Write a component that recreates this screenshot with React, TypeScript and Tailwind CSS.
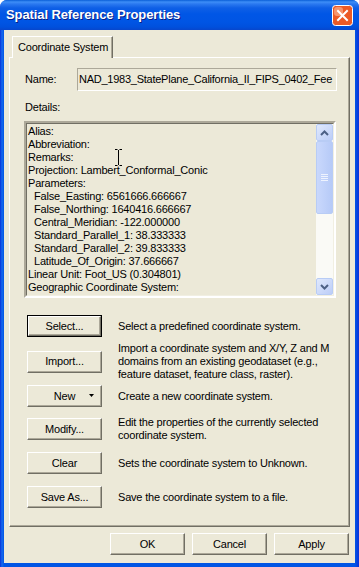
import React from "react";

function Btn({ label, def = false, arrow = false }: { label: string; def?: boolean; arrow?: boolean }) {
  return (
    <div
      className={
        "relative w-[75px] h-[22px] shrink-0 flex items-center justify-center bg-[#ece9d8] " +
        (def ? "border border-black" : "")
      }
    >
      <div className="absolute inset-0 border-t border-l border-t-white border-l-white border-r border-b border-r-[#716f64] border-b-[#716f64] shadow-[inset_-1px_-1px_0_#aca899]" />
      <span className="relative">{label}</span>
      {arrow && (
        <svg className="absolute right-[8px] top-[9px]" width="5" height="3" viewBox="0 0 5 3">
          <path d="M0 0H5L2.5 3Z" fill="#000" />
        </svg>
      )}
    </div>
  );
}

function ScrollBtn({ up }: { up: boolean }) {
  return (
    <div className="w-[17px] h-[17px] shrink-0 rounded-[2px] border border-[#b8ccf5] bg-[linear-gradient(to_bottom_right,#e0e9fd,#bccdf7)] flex items-center justify-center">
      <svg width="9" height="6" viewBox="0 0 9 6">
        {up ? (
          <path d="M1 5L4.5 1.5L8 5" stroke="#4d6185" strokeWidth="2" fill="none" />
        ) : (
          <path d="M1 1L4.5 4.5L8 1" stroke="#4d6185" strokeWidth="2" fill="none" />
        )}
      </svg>
    </div>
  );
}

function CloseIcon() {
  return (
    <svg width="21" height="21" viewBox="0 0 21 21" className="mr-[1px] shrink-0">
      <rect x="0.5" y="0.5" width="20" height="20" rx="3" fill="#ec5a26" stroke="#ffffff" />
      <rect x="2" y="2" width="9" height="9" rx="3" fill="#f6946c" />
      <path d="M6 6L15 15M15 6L6 15" stroke="#ffffff" strokeWidth="2" strokeLinecap="square" />
    </svg>
  );
}

export default function App() {
  const lines: [string, boolean][] = [
    ["Alias:", false],
    ["Abbreviation:", false],
    ["Remarks:", false],
    ["Projection: Lambert_Conformal_Conic", false],
    ["Parameters:", false],
    ["False_Easting: 6561666.666667", true],
    ["False_Northing: 1640416.666667", true],
    ["Central_Meridian: -122.000000", true],
    ["Standard_Parallel_1: 38.333333", true],
    ["Standard_Parallel_2: 39.833333", true],
    ["Latitude_Of_Origin: 37.666667", true],
    ["Linear Unit: Foot_US (0.304801)", false],
    ["Geographic Coordinate System:", false],
  ];

  return (
    <div className="w-[359px] h-[567px] flex flex-col overflow-hidden rounded-t-[7px] bg-[linear-gradient(to_right,#0831d9,#166aee_2px,#0055e5_4px,#0055e5_calc(100%-4px),#0831d9)] font-['Liberation_Sans',Arial,sans-serif] text-[11px] leading-[13px] tracking-[-0.2px] text-black">
      {/* Title bar */}
      <div className="h-[30px] shrink-0 flex items-center justify-between pl-[6px] pr-[5px] bg-[linear-gradient(to_bottom,#0a5fd8_0px,#3d8ef7_2px,#2a79f0_4px,#0e5fe6_8px,#0056e6_14px,#0055e4_22px,#0050dd_27px,#0746cc_30px)]">
        <span className="text-white font-bold text-[13px] leading-[16px] [text-shadow:1px_1px_0_#0a1f86] tracking-[-0.1px]">
          Spatial Reference Properties
        </span>
        <CloseIcon />
      </div>

      {/* Body */}
      <div className="flex-1 mx-[4px] mb-[4px] bg-[#ece9d8] flex flex-col pt-[6px] px-[5px]">
        {/* Tab */}
        <div className="flex pl-[3px]">
          <div className="relative z-10 -mb-[1px] w-[101px] h-[22px] bg-[#ece9d8] border-t border-l border-white border-r border-r-[#716f64] shadow-[inset_-1px_0_0_#aca899] pl-[5px] pt-[4px]">
            Coordinate System
          </div>
        </div>

        {/* Panel */}
        <div className="h-[470px] shrink-0 border border-t-white border-l-white border-r-[#716f64] border-b-[#716f64] shadow-[inset_-1px_-1px_0_#aca899] flex flex-col pt-[10px]">
          {/* Name row */}
          <div className="flex items-center pl-[15px] h-[23px]">
            <span className="w-[52px] shrink-0">Name:</span>
            <div className="w-[260px] h-[23px] border border-t-[#aca899] border-l-[#aca899] border-r-white border-b-white flex items-center pl-[1px] overflow-hidden whitespace-nowrap tracking-[-0.25px]">
              NAD_1983_StatePlane_California_II_FIPS_0402_Fee
            </div>
          </div>

          <div className="pl-[15px] mt-[10px]">Details:</div>

          {/* Details box */}
          <div className="relative ml-[14px] mt-[7px] w-[312px] h-[177px] shrink-0 border-2 border-t-[#aca899] border-l-[#aca899] border-r-white border-b-white flex">
            <div className="absolute inset-0 border border-t-[#716f64] border-l-[#716f64] border-r-[#f1efe2] border-b-[#f1efe2] pointer-events-none" />
            <div className="flex-1 pl-[2px] pt-[2px] whitespace-nowrap overflow-hidden">
              {lines.map(([t, ind], i) => (
                <div key={i} className={ind ? "pl-[6px]" : ""}>
                  {t}
                </div>
              ))}
            </div>
            <div className="relative w-[17px] shrink-0 flex flex-col bg-[#fafaf6] my-[1px] mr-[1px]">
              <ScrollBtn up />
              <div className="h-[73px] shrink-0 rounded-[2px] border border-[#b8ccf5] bg-[linear-gradient(to_right,#c9d8fc,#b6caf7)] flex flex-col items-center justify-center gap-[1px]">
                <div className="w-[7px] h-[1px] bg-[#eef3fe]" />
                <div className="w-[7px] h-[1px] bg-[#eef3fe]" />
                <div className="w-[7px] h-[1px] bg-[#eef3fe]" />
                <div className="w-[7px] h-[1px] bg-[#eef3fe]" />
              </div>
              <div className="flex-1" />
              <ScrollBtn up={false} />
            </div>
            <svg className="absolute left-[89px] top-[26px]" width="7" height="17" viewBox="0 0 7 17">
              <path d="M0 0.5H2.5M4.5 0.5H7M3.5 1V16M0 16.5H2.5M4.5 16.5H7" stroke="#000" strokeWidth="1" fill="none" />
            </svg>
          </div>

          {/* Action rows */}
          <div className="pl-[17px] flex flex-col">
            <div className="flex items-center h-[22px] mt-[17px]">
              <Btn label="Select..." def />
              <span className="ml-[16px] whitespace-nowrap">Select a predefined coordinate system.</span>
            </div>
            <div className="flex items-center h-[39px] mt-[5px]">
              <Btn label="Import..." />
              <span className="ml-[16px] whitespace-nowrap">
                Import a coordinate system and X/Y, Z and M
                <br />
                domains from an existing geodataset (e.g.,
                <br />
                feature dataset, feature class, raster).
              </span>
            </div>
            <div className="flex items-center h-[22px] mt-[4px]">
              <Btn label="New" arrow />
              <span className="ml-[16px] whitespace-nowrap">Create a new coordinate system.</span>
            </div>
            <div className="flex items-center h-[26px] mt-[9px]">
              <Btn label="Modify..." />
              <span className="ml-[16px] whitespace-nowrap">
                Edit the properties of the currently selected
                <br />
                coordinate system.
              </span>
            </div>
            <div className="flex items-center h-[22px] mt-[10px]">
              <Btn label="Clear" />
              <span className="ml-[16px] whitespace-nowrap">Sets the coordinate system to Unknown.</span>
            </div>
            <div className="flex items-center h-[22px] mt-[12px]">
              <Btn label="Save As..." />
              <span className="ml-[16px] whitespace-nowrap">Save the coordinate system to a file.</span>
            </div>
          </div>
        </div>

        {/* Bottom buttons */}
        <div className="flex justify-end gap-[7px] mt-[6px] pr-[1px]">
          <div className="h-[23px] flex"><Btn label="OK" /></div>
          <div className="h-[23px] flex"><Btn label="Cancel" /></div>
          <div className="h-[23px] flex"><Btn label="Apply" /></div>
        </div>
      </div>
    </div>
  );
}
